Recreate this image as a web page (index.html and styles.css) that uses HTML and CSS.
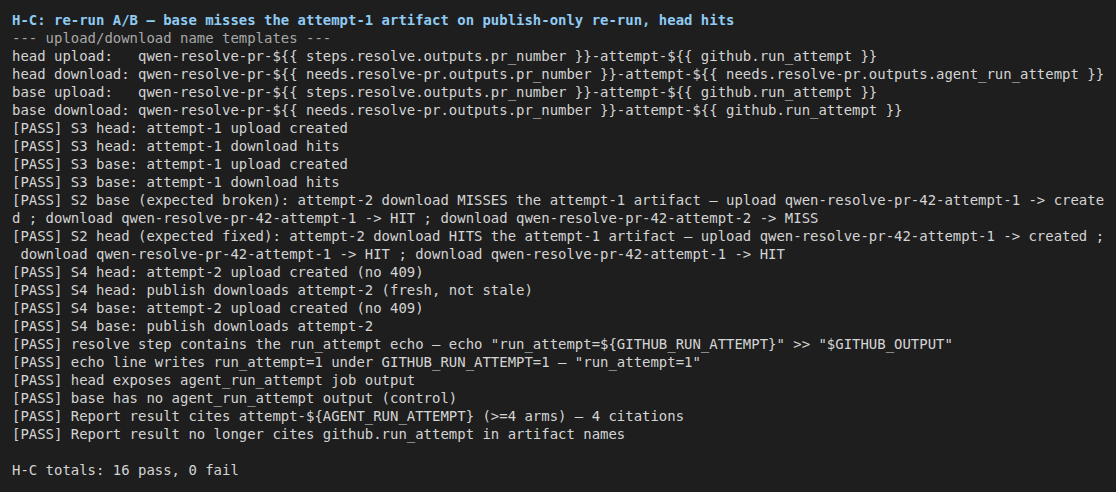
FILE: index.html
```html
<!DOCTYPE html>
<html lang="en">
<head>
<meta charset="utf-8">
<title>H-C re-run A/B</title>
<link rel="stylesheet" href="styles.css">
</head>
<body>
<main class="term">
<div class="line title">H-C: re-run A/B — base misses the attempt-1 artifact on publish-only re-run, head hits</div>
<div class="line dim">--- upload/download name templates ---</div>
<div class="line">head upload:   qwen-resolve-pr-${{ steps.resolve.outputs.pr_number }}-attempt-${{ github.run_attempt }}</div>
<div class="line">head download: qwen-resolve-pr-${{ needs.resolve-pr.outputs.pr_number }}-attempt-${{ needs.resolve-pr.outputs.agent_run_attempt }}</div>
<div class="line">base upload:   qwen-resolve-pr-${{ steps.resolve.outputs.pr_number }}-attempt-${{ github.run_attempt }}</div>
<div class="line">base download: qwen-resolve-pr-${{ needs.resolve-pr.outputs.pr_number }}-attempt-${{ github.run_attempt }}</div>
<div class="line">[PASS] S3 head: attempt-1 upload created</div>
<div class="line">[PASS] S3 head: attempt-1 download hits</div>
<div class="line">[PASS] S3 base: attempt-1 upload created</div>
<div class="line">[PASS] S3 base: attempt-1 download hits</div>
<div class="line">[PASS] S2 base (expected broken): attempt-2 download MISSES the attempt-1 artifact — upload qwen-resolve-pr-42-attempt-1 -> create</div>
<div class="line">d ; download qwen-resolve-pr-42-attempt-1 -> HIT ; download qwen-resolve-pr-42-attempt-2 -> MISS</div>
<div class="line">[PASS] S2 head (expected fixed): attempt-2 download HITS the attempt-1 artifact — upload qwen-resolve-pr-42-attempt-1 -> created ;</div>
<div class="line"> download qwen-resolve-pr-42-attempt-1 -> HIT ; download qwen-resolve-pr-42-attempt-1 -> HIT</div>
<div class="line">[PASS] S4 head: attempt-2 upload created (no 409)</div>
<div class="line">[PASS] S4 head: publish downloads attempt-2 (fresh, not stale)</div>
<div class="line">[PASS] S4 base: attempt-2 upload created (no 409)</div>
<div class="line">[PASS] S4 base: publish downloads attempt-2</div>
<div class="line">[PASS] resolve step contains the run_attempt echo — echo "run_attempt=${GITHUB_RUN_ATTEMPT}" &gt;&gt; "$GITHUB_OUTPUT"</div>
<div class="line">[PASS] echo line writes run_attempt=1 under GITHUB_RUN_ATTEMPT=1 — "run_attempt=1"</div>
<div class="line">[PASS] head exposes agent_run_attempt job output</div>
<div class="line">[PASS] base has no agent_run_attempt output (control)</div>
<div class="line">[PASS] Report result cites attempt-${AGENT_RUN_ATTEMPT} (&gt;=4 arms) — 4 citations</div>
<div class="line">[PASS] Report result no longer cites github.run_attempt in artifact names</div>
<div class="line"> </div>
<div class="line">H-C totals: 16 pass, 0 fail</div>
</main>
</body>
</html>
```

FILE: styles.css
```css
html, body {
  margin: 0;
  padding: 0;
  background: #1e1e1e;
}

body {
  width: 1116px;
  height: 492px;
  overflow: hidden;
}

.term {
  display: flex;
  flex-direction: column;
  padding: 11px 12px 0 12px;
  font-family: "DejaVu Sans Mono", "Liberation Mono", monospace;
  font-size: 13.96px;
  line-height: 18px;
  color: #d4d4d4;
}

.line {
  white-space: pre;
  height: 18px;
}

.title {
  color: #8fcbf3;
  font-weight: bold;
}

.dim {
  color: #a8a8a8;
}
```
